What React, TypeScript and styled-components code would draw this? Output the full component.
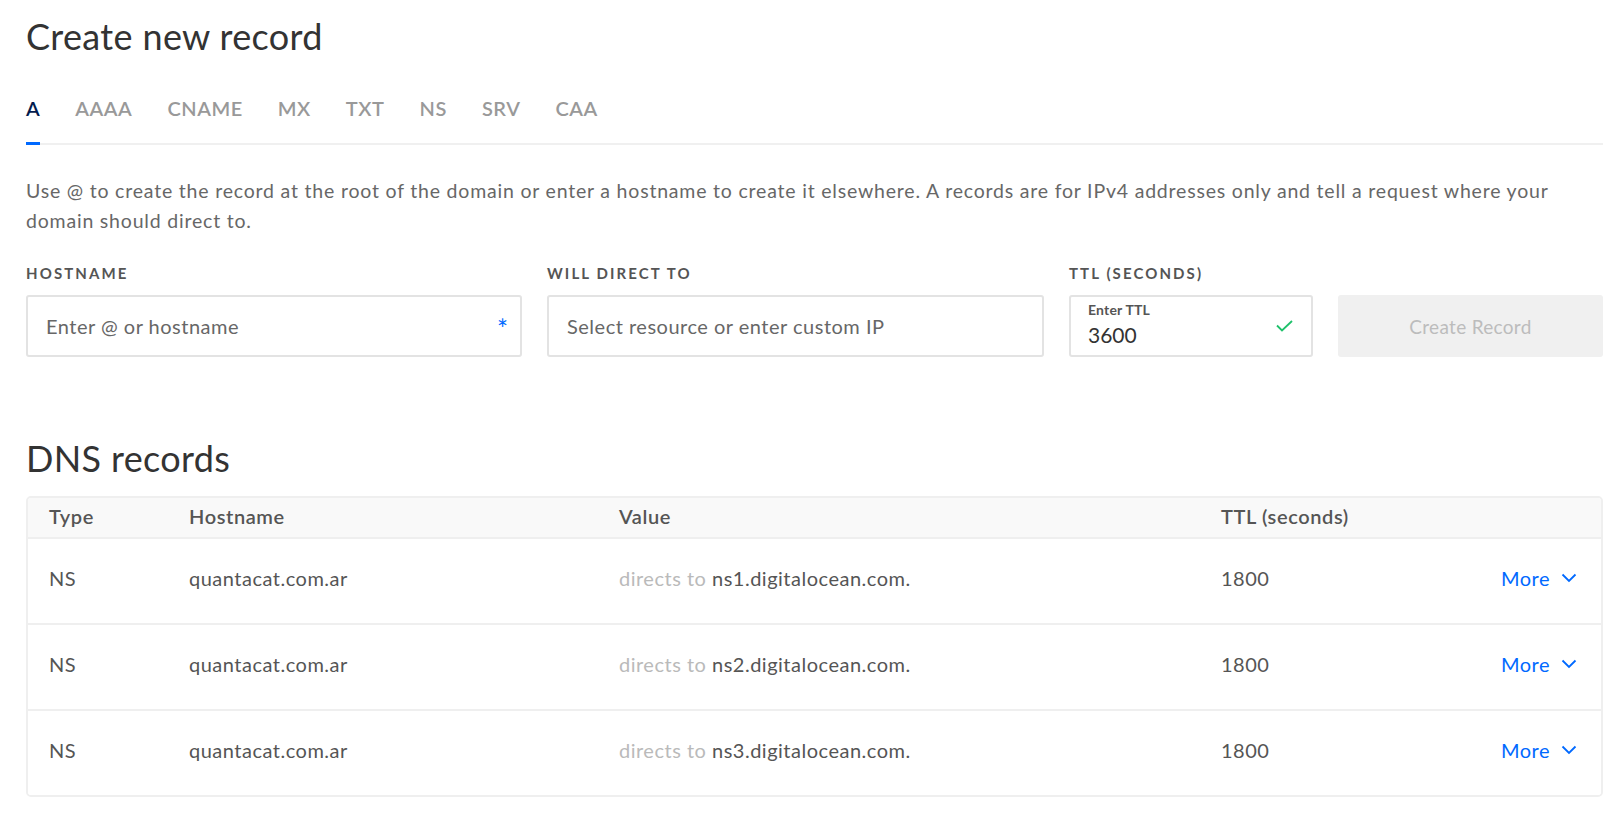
import React from "react";
import styled, { createGlobalStyle } from "styled-components";

const GlobalStyle = createGlobalStyle`
  html, body { margin: 0; padding: 0; background: #ffffff; }
  body { font-family: Lato, "Open Sans", sans-serif; color: #333; }
  * { box-sizing: border-box; }
`;

const Page = styled.div`
  padding: 14px 17px 0 26px;
`;

const Heading = styled.h1<{ $top?: number }>`
  margin: ${(p) => p.$top ?? 0}px 0 0 0;
  font-size: 36px;
  font-weight: 400;
  letter-spacing: 0.35px;
  line-height: 44px;
  color: #333;
`;

const Tabs = styled.div`
  display: flex;
  gap: 35px;
  margin-top: 38px;
  border-bottom: 2px solid #f0f0f0;
`;

const Tab = styled.div<{ $active?: boolean }>`
  position: relative;
  font-size: 20px;
  font-weight: 600;
  letter-spacing: 0.55px;
  line-height: 24px;
  padding-bottom: 23px;
  color: ${(p) => (p.$active ? "#031b4e" : "#999999")};
  &::after {
    content: "";
    display: ${(p) => (p.$active ? "block" : "none")};
    position: absolute;
    left: 0;
    width: 14px;
    bottom: -2px;
    height: 3px;
    background: #0069ff;
  }
`;

const Description = styled.p`
  margin: 31px 0 0 0;
  font-size: 19.5px;
  letter-spacing: 0.8px;
  line-height: 30px;
  color: #676767;
`;

const FormRow = styled.div`
  display: grid;
  grid-template-columns: 496px 497px 244px 1fr;
  column-gap: 25px;
  margin-top: 28px;
  align-items: end;
`;

const Field = styled.div`
  display: flex;
  flex-direction: column;
  gap: 13px;
`;

const Label = styled.div`
  font-size: 15px;
  font-weight: 700;
  letter-spacing: 2.1px;
  color: #555;
  line-height: 18px;
  text-transform: uppercase;
`;

const InputBox = styled.div`
  position: relative;
  height: 62px;
  border: 2px solid #e3e3e3;
  border-radius: 3px;
  background: #fff;
  display: flex;
  align-items: center;
  padding: 0 18px;
`;

const Placeholder = styled.span`
  font-size: 20px;
  letter-spacing: 0.5px;
  color: #676767;
`;

const Asterisk = styled.span`
  position: absolute;
  right: 12px;
  top: 19px;
  color: #0069ff;
  font-size: 26px;
  line-height: 26px;
  font-weight: 400;
`;

const TtlBox = styled(InputBox)`
  flex-direction: column;
  align-items: flex-start;
  justify-content: center;
  padding: 0 17px 3px 17px;
`;

const TtlLabel = styled.span`
  font-size: 14px;
  font-weight: 700;
  letter-spacing: 0.2px;
  color: #555;
  line-height: 15px;
  margin-bottom: 6px;
`;

const TtlValue = styled.span`
  font-size: 21px;
  color: #333;
  line-height: 24px;
`;

const Check = styled.svg`
  position: absolute;
  right: 18px;
  top: 23px;
`;

const Button = styled.button`
  height: 62px;
  border: none;
  border-radius: 3px;
  background: #f0f0f0;
  color: #bcbcbc;
  font-family: inherit;
  font-size: 19px;
  letter-spacing: 0.3px;
  font-weight: 400;
`;

const Table = styled.div`
  margin-top: 16px;
  border: 2px solid #efefef;
  border-radius: 5px;
  overflow: hidden;
`;

const Row = styled.div<{ $header?: boolean }>`
  display: grid;
  grid-template-columns: 140px 430px 602px 1fr auto;
  align-items: center;
  padding: 0 24px ${(p) => (p.$header ? "4px" : "6px")} 21px;
  height: ${(p) => (p.$header ? "39px" : "86px")};
  background: ${(p) => (p.$header ? "#f9f9f9" : "#fff")};
  border-top: ${(p) => (p.$header ? "none" : "2px solid #efefef")};
  font-size: 20px;
  letter-spacing: ${(p) => (p.$header ? "0.6px" : "0.5px")};
  font-weight: ${(p) => (p.$header ? 600 : 400)};
  color: #555;
`;

const Muted = styled.span`
  color: #bababa;
`;

const More = styled.span`
  display: flex;
  align-items: center;
  gap: 11px;
  color: #0069ff;
`;

const Chevron = () => (
  <svg width="16" height="10" viewBox="0 0 16 10" fill="none">
    <path d="M1.5 1.5 L8 8 L14.5 1.5" stroke="#0069ff" strokeWidth="1.8" />
  </svg>
);

const tabs = ["A", "AAAA", "CNAME", "MX", "TXT", "NS", "SRV", "CAA"];
const records = [
  "ns1.digitalocean.com.",
  "ns2.digitalocean.com.",
  "ns3.digitalocean.com.",
];

export default function App() {
  return (
    <Page>
      <GlobalStyle />
      <Heading>Create new record</Heading>
      <Tabs>
        {tabs.map((t, i) => (
          <Tab key={t} $active={i === 0}>
            {t}
          </Tab>
        ))}
      </Tabs>
      <Description>
        Use @ to create the record at the root of the domain or enter a hostname to create it
        elsewhere. A records are for IPv4 addresses only and tell a request where your domain
        should direct to.
      </Description>
      <FormRow>
        <Field>
          <Label>Hostname</Label>
          <InputBox>
            <Placeholder>Enter @ or hostname</Placeholder>
            <Asterisk>*</Asterisk>
          </InputBox>
        </Field>
        <Field>
          <Label>Will direct to</Label>
          <InputBox>
            <Placeholder>Select resource or enter custom IP</Placeholder>
          </InputBox>
        </Field>
        <Field>
          <Label>TTL (seconds)</Label>
          <TtlBox>
            <TtlLabel>Enter TTL</TtlLabel>
            <TtlValue>3600</TtlValue>
            <Check width="17" height="12" viewBox="0 0 17 12" fill="none">
              <path d="M1 5.5 L6 10.5 L16 1" stroke="#1fc16b" strokeWidth="1.8" />
            </Check>
          </TtlBox>
        </Field>
        <Button>Create Record</Button>
      </FormRow>
      <Heading $top={79}>DNS records</Heading>
      <Table>
        <Row $header>
          <span>Type</span>
          <span>Hostname</span>
          <span>Value</span>
          <span>TTL (seconds)</span>
          <span />
        </Row>
        {records.map((r) => (
          <Row key={r}>
            <span>NS</span>
            <span>quantacat.com.ar</span>
            <span>
              <Muted>directs to</Muted> {r}
            </span>
            <span>1800</span>
            <More>
              More <Chevron />
            </More>
          </Row>
        ))}
      </Table>
    </Page>
  );
}
